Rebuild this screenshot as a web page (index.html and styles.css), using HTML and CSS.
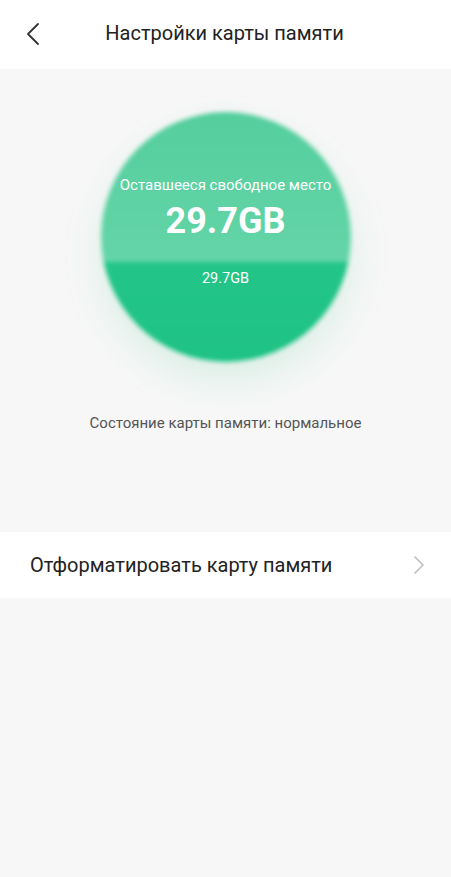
FILE: index.html
```html
<!DOCTYPE html>
<html lang="ru">
<head>
  <meta charset="UTF-8">
  <meta name="viewport" content="width=device-width, initial-scale=1.0">
  <title>Настройки карты памяти</title>
  <link rel="stylesheet" href="styles.css">
</head>
<body>
  <header class="topbar">
    <button class="back" aria-label="Назад">
      <svg width="14" height="24" viewBox="0 0 14 24"><path d="M12 2 L2 12 L12 22" fill="none" stroke="#333" stroke-width="1.8" stroke-linecap="round" stroke-linejoin="round"/></svg>
    </button>
    <h1>Настройки карты памяти</h1>
  </header>

  <section class="storage">
    <div class="ball">
      <div class="ball-top">
        <span class="caption">Оставшееся свободное место</span>
        <span class="big">29.7GB</span>
      </div>
      <div class="ball-bottom">
        <span class="small">29.7GB</span>
      </div>
    </div>
    <p class="status">Состояние карты памяти: нормальное</p>
  </section>

  <div class="row">
    <span>Отформатировать карту памяти</span>
    <svg width="12" height="20" viewBox="0 0 12 20"><path d="M2 2 L10 10 L2 18" fill="none" stroke="#bdbdbd" stroke-width="1.6" stroke-linecap="round" stroke-linejoin="round"/></svg>
  </div>
</body>
</html>
```

FILE: styles.css
```css
* { box-sizing: border-box; margin: 0; padding: 0; }
html, body { height: 100%; }
body {
  font-family: Roboto, "Noto Sans", sans-serif;
  background: #f7f7f7;
  color: #222;
}
.topbar {
  height: 69px;
  background: #fff;
  display: flex;
  align-items: center;
  justify-content: center;
  position: relative;
}
.topbar h1 {
  font-size: 20px;
  font-weight: 400;
  color: #222;
  margin-top: -3px;
  margin-left: -2px;
}
.back {
  position: absolute;
  left: 26px;
  top: 22px;
  border: none;
  background: none;
  display: flex;
}
.storage {
  height: 463px;
  display: flex;
  flex-direction: column;
  align-items: center;
  padding-top: 43px;
}
/* the green ball: blurred background layer, sharp text on top */
.ball {
  position: relative;
  width: 250px;
  height: 250px;
  border-radius: 50%;
  display: flex;
  flex-direction: column;
  color: #fff;
  box-shadow: 0 18px 40px rgba(40, 190, 130, 0.14);
}
.ball::before {
  content: "";
  position: absolute;
  inset: 0;
  border-radius: 50%;
  background: linear-gradient(#55ce9d 0%, #64d5a8 60%, #23c588 60%, #1fc385 100%);
  filter: blur(2px);
}
.ball-top, .ball-bottom { position: relative; }
.ball-top {
  height: 150px;
  display: flex;
  flex-direction: column;
  align-items: center;
  justify-content: flex-end;
  padding-bottom: 20px;
}
.ball-bottom {
  flex: 1;
  display: flex;
  justify-content: center;
  padding-top: 8px;
}
.caption { font-size: 15px; }
.big {
  font-size: 36px;
  font-weight: 700;
  margin-top: 6px;
}
.small { font-size: 14.5px; }
.status {
  margin-top: 52px;
  font-size: 15px;
  color: #555;
}
.row {
  height: 66px;
  background: #fff;
  display: flex;
  align-items: center;
  justify-content: space-between;
  padding: 0 26px 0 30px;
  font-size: 20px;
  color: #222;
}
```
